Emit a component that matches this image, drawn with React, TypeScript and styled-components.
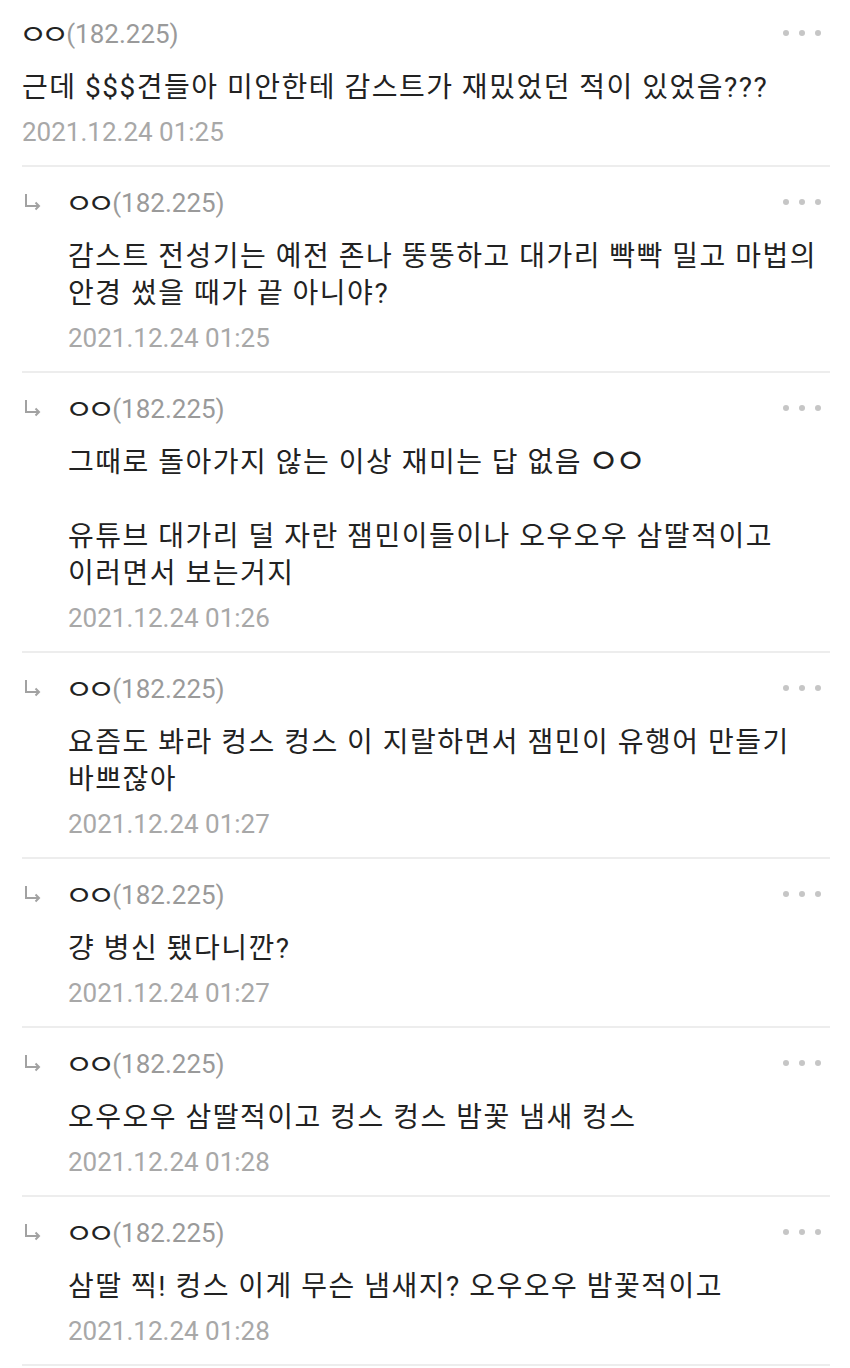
import React from 'react';
import styled, { createGlobalStyle } from 'styled-components';

interface CommentData {
    nick: string;
    ip: string;
    text: string;
    date: string;
    reply?: boolean;
}

const comments: CommentData[] = [
    { nick: 'ㅇㅇ', ip: '(182.225)', text: '근데 $$$견들아 미안한테 감스트가 재밌었던 적이 있었음???', date: '2021.12.24 01:25' },
    { nick: 'ㅇㅇ', ip: '(182.225)', text: '감스트 전성기는 예전 존나 뚱뚱하고 대가리 빡빡 밀고 마법의\n안경 썼을 때가 끝 아니야?', date: '2021.12.24 01:25', reply: true },
    { nick: 'ㅇㅇ', ip: '(182.225)', text: '그때로 돌아가지 않는 이상 재미는 답 없음 ㅇㅇ\n\n유튜브 대가리 덜 자란 잼민이들이나 오우오우 삼딸적이고\n이러면서 보는거지', date: '2021.12.24 01:26', reply: true },
    { nick: 'ㅇㅇ', ip: '(182.225)', text: '요즘도 봐라 컹스 컹스 이 지랄하면서 잼민이 유행어 만들기\n바쁘잖아', date: '2021.12.24 01:27', reply: true },
    { nick: 'ㅇㅇ', ip: '(182.225)', text: '걍 병신 됐다니깐?', date: '2021.12.24 01:27', reply: true },
    { nick: 'ㅇㅇ', ip: '(182.225)', text: '오우오우 삼딸적이고 컹스 컹스 밤꽃 냄새 컹스', date: '2021.12.24 01:28', reply: true },
    { nick: 'ㅇㅇ', ip: '(182.225)', text: '삼딸 찍! 컹스 이게 무슨 냄새지? 오우오우 밤꽃적이고', date: '2021.12.24 01:28', reply: true },
];

const GlobalStyle = createGlobalStyle`
    body {
        margin: 0;
        background: #fff;
        font-family: Roboto, "Noto Sans CJK KR", sans-serif;
    }
`;

const List = styled.ul`
    list-style: none;
    margin: 0;
    padding: 0 20px 0 22px;
`;

const Item = styled.li<{ $first?: boolean }>`
    display: flex;
    padding: ${props => (props.$first ? '18px' : '20px')} 0 18px 0;
    border-bottom: 2px solid #ededed;
`;

const Indent = styled.div`
    flex: 0 0 46px;
    height: 30px;
    display: flex;
    align-items: center;
    padding-left: 2px;
    box-sizing: border-box;
`;

const Body = styled.div`
    flex: 1;
    min-width: 0;
`;

const Head = styled.div`
    display: flex;
    align-items: center;
    justify-content: space-between;
    height: 30px;
`;

const Writer = styled.div`
    font-size: 26px;
    line-height: 30px;
    white-space: nowrap;
`;

const Nick = styled.span`
    color: #222;
    font-family: "Noto Sans CJK KR", sans-serif;
    font-size: 24px;
`;

const Ip = styled.span`
    color: #9a9a9a;
`;

// the phone font draws ㅇ rounder and larger than Noto does
const Jamo = styled.span<{ $sx: number; $sy: number }>`
    display: inline-block;
    transform: scale(${props => props.$sx}, ${props => props.$sy});
    transform-origin: 50% 58%;
`;

const More = styled.div`
    display: flex;
    gap: 10px;
    margin-right: 9px;
`;

const Dot = styled.span`
    width: 6px;
    height: 6px;
    border-radius: 50%;
    background: #c6c6c6;
`;

const Text = styled.p`
    margin: 21px 0 0 0;
    font-size: 28px;
    line-height: 37px;
    letter-spacing: 1.5px;
    color: #222;
    white-space: pre-wrap;
    word-break: keep-all;
`;

const Date = styled.div`
    margin-top: 11px;
    font-size: 26px;
    line-height: 30px;
    color: #a8a8a8;
`;

const withJamo = (s: string, sx: number, sy: number) =>
    s.split(/(ㅇ)/).map((part, i) =>
        part === 'ㅇ' ? (
            <Jamo key={i} $sx={sx} $sy={sy}>
                {part}
            </Jamo>
        ) : (
            part
        )
    );

const ReplyArrow: React.FC = () => (
    <svg width="18" height="18" viewBox="0 0 18 18" fill="none" stroke="#a2a2a2" strokeWidth="2">
        <path d="M2 1 V13 H15" />
        <path d="M11.5 9.5 L15 13 L11.5 16.5" />
    </svg>
);

const Comment: React.FC<{ data: CommentData; first?: boolean }> = ({ data, first }) => (
    <Item $first={first}>
        {data.reply && (
            <Indent>
                <ReplyArrow />
            </Indent>
        )}
        <Body>
            <Head>
                <Writer>
                    <Nick>{withJamo(data.nick, 1.3, 1.1)}</Nick>
                    <Ip>{data.ip}</Ip>
                </Writer>
                <More>
                    <Dot />
                    <Dot />
                    <Dot />
                </More>
            </Head>
            <Text>{withJamo(data.text, 1.25, 1.2)}</Text>
            <Date>{data.date}</Date>
        </Body>
    </Item>
);

const App: React.FC = () => (
    <>
        <GlobalStyle />
        <List>
            {comments.map((c, i) => (
                <Comment key={i} data={c} first={i === 0} />
            ))}
        </List>
    </>
);

export default App;
